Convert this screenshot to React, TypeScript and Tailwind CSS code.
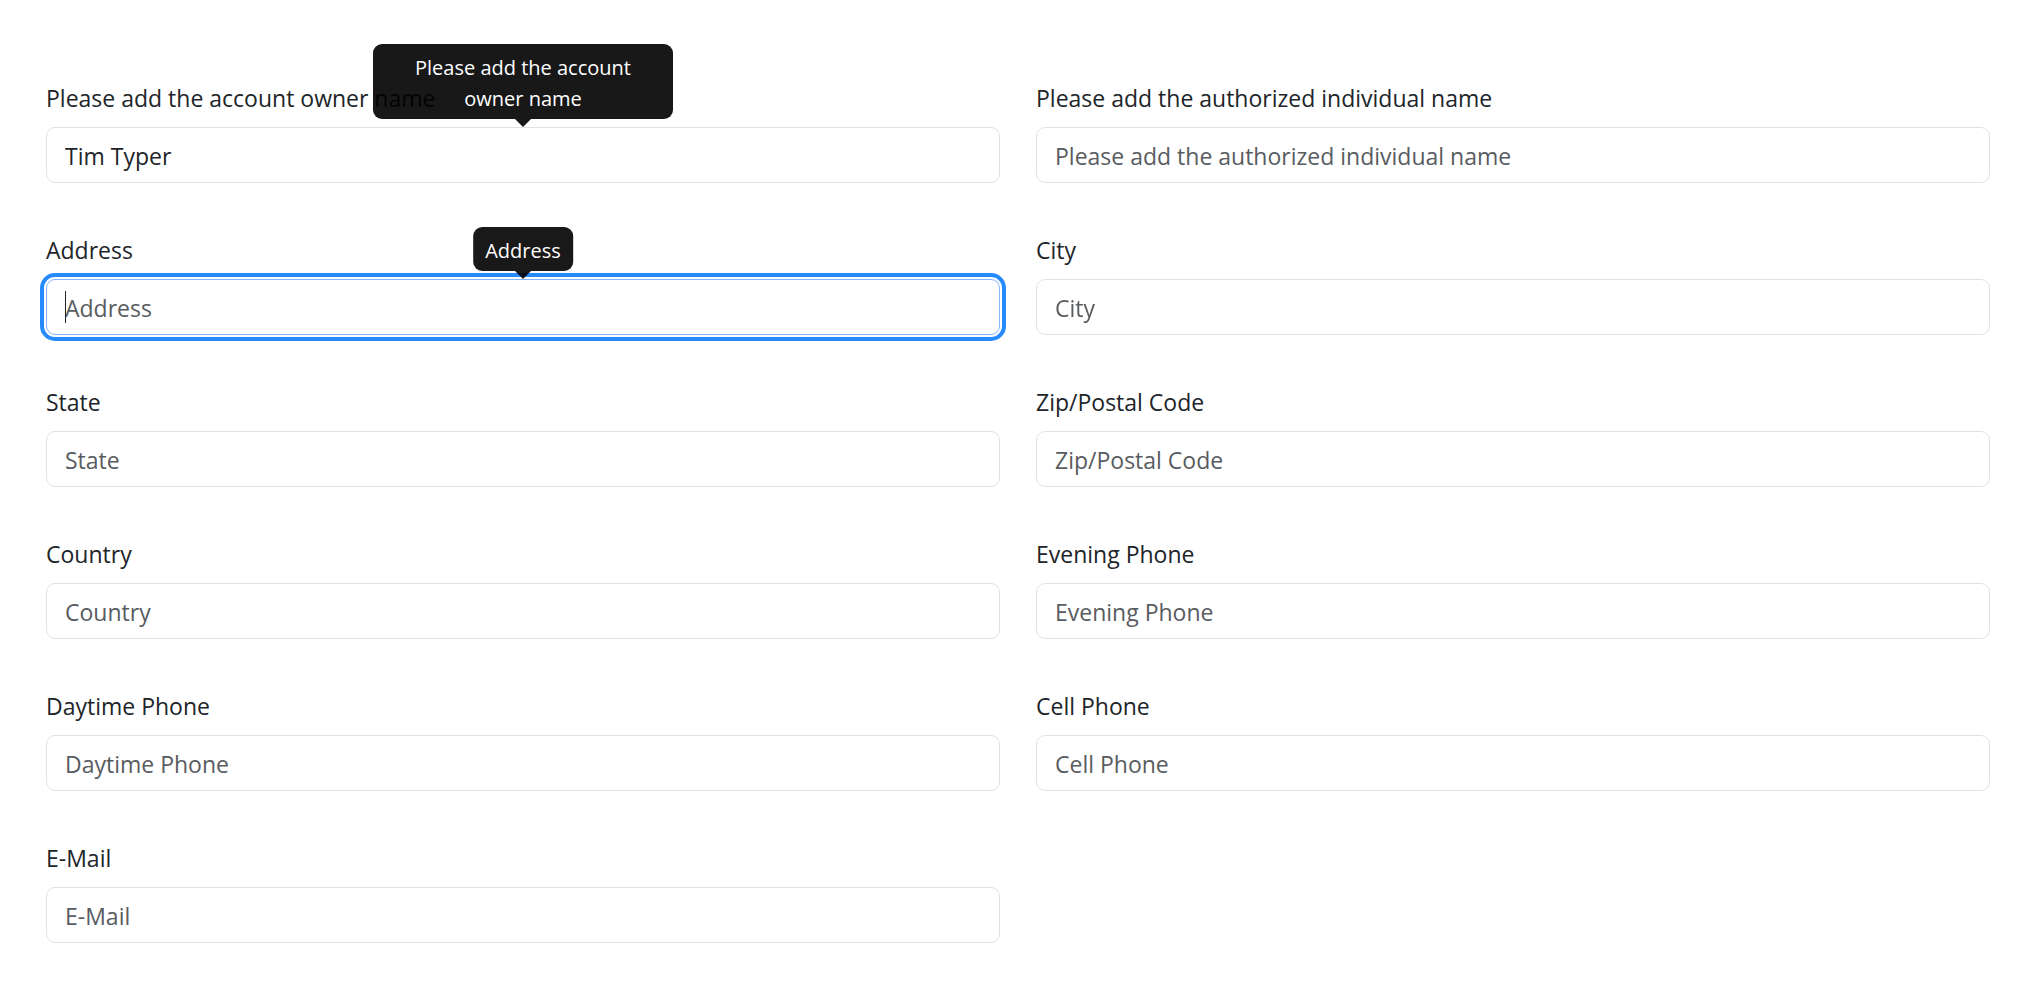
import React, { useState } from 'react';

interface Field {
  id: string;
  label: string;
  type?: string;
  tooltip?: boolean;
}

const FIELDS: Field[] = [
  { id: 'owner', label: 'Please add the account owner name', tooltip: true },
  { id: 'authorized', label: 'Please add the authorized individual name' },
  { id: 'address', label: 'Address', tooltip: true },
  { id: 'city', label: 'City' },
  { id: 'state', label: 'State' },
  { id: 'zip', label: 'Zip/Postal Code' },
  { id: 'country', label: 'Country' },
  { id: 'evening', label: 'Evening Phone', type: 'tel' },
  { id: 'daytime', label: 'Daytime Phone', type: 'tel' },
  { id: 'cell', label: 'Cell Phone', type: 'tel' },
  { id: 'email', label: 'E-Mail', type: 'email' },
];

function Tooltip({ text }: { text: string }) {
  return (
    <div
      role="tooltip"
      className="pointer-events-none absolute bottom-full left-1/2 z-10 flex w-max max-w-[300px] -translate-x-1/2 flex-col items-center opacity-90"
    >
      <div className="rounded-[9px] bg-black px-3 pt-2 pb-[5px] text-center text-xl leading-[31px] text-white">
        {text}
      </div>
      <div className="h-2 w-4 bg-black [clip-path:polygon(0_0,100%_0,50%_100%)]" />
    </div>
  );
}

export default function App() {
  const [values, setValues] = useState<Record<string, string>>({ owner: 'Tim Typer' });
  const [focused, setFocused] = useState('address');

  const handleChange = (id: string, value: string) => {
    setValues(prev => ({ ...prev, [id]: value }));
  };

  return (
    <form className="grid grid-cols-2 gap-x-9 gap-y-[49px] bg-white pt-20 pr-[54px] pb-11 pl-[46px] font-['Open_Sans',sans-serif] text-[23px] leading-9 text-[#212529]">
      {FIELDS.map(field => (
        <div key={field.id}>
          <label htmlFor={field.id} className="mb-[11px] block">
            {field.label}
          </label>
          <div className="relative">
            <input
              id={field.id}
              type={field.type || 'text'}
              value={values[field.id] || ''}
              placeholder={field.label}
              autoFocus={field.id === 'address'}
              onFocus={() => setFocused(field.id)}
              onBlur={() => setFocused('')}
              onChange={e => handleChange(field.id, e.target.value)}
              className="block h-14 w-full rounded-[9px] border border-[#dee2e6] bg-white px-[18px] pt-0.5 placeholder-shown:caret-transparent placeholder:text-[#595c5f] focus:border-[#86b7fe] focus:outline-4 focus:outline-offset-2 focus:outline-[#268bff]"
            />
            {/* cursor for empty fields */}
            {focused === field.id && !values[field.id] && (
              <span className="pointer-events-none absolute top-3 left-[19px] h-8 w-px bg-[#212529]" />
            )}
            {field.tooltip && <Tooltip text={field.label} />}
          </div>
        </div>
      ))}
    </form>
  );
}
